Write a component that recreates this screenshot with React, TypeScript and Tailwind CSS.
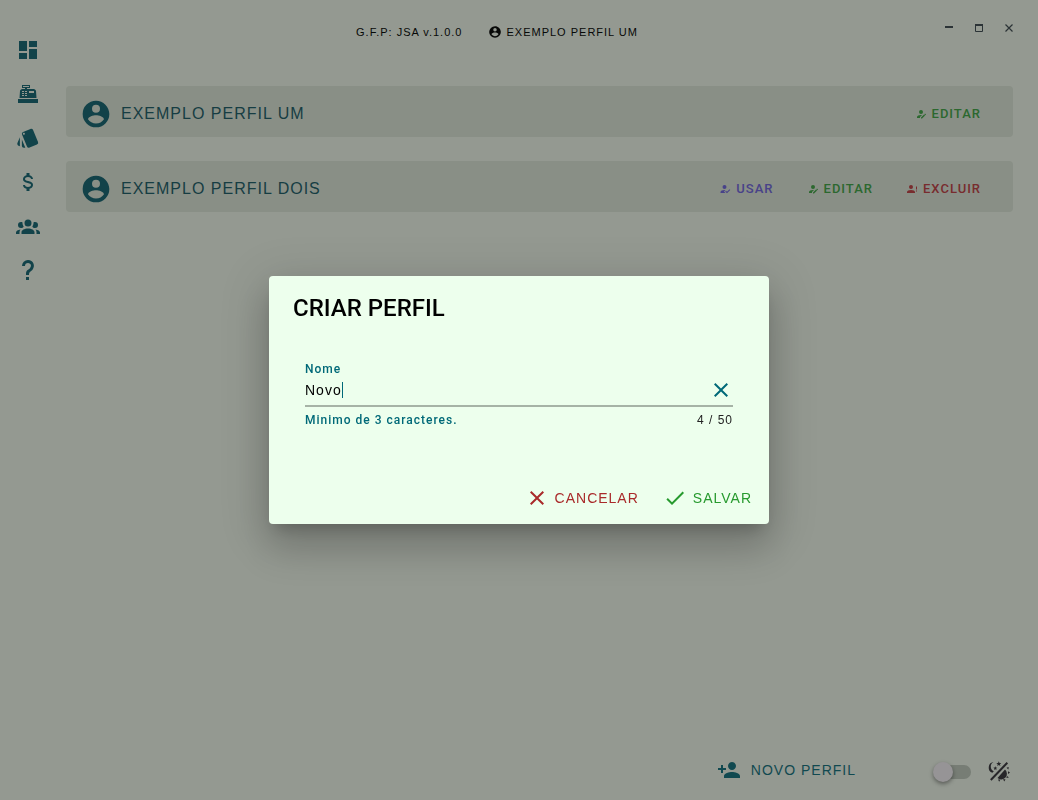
import { useState, type ReactNode } from "react";
import { MdCheck, MdClose, MdDashboard, MdPersonAdd, MdStyle } from "react-icons/md";

const paths = {
  account:
    "M12 19.2c-2.5 0-4.71-1.28-6-3.2.03-2 4-3.1 6-3.1s5.97 1.1 6 3.1a7.23 7.23 0 0 1-6 3.2M12 5a3 3 0 0 1 3 3 3 3 0 0 1-3 3 3 3 0 0 1-3-3 3 3 0 0 1 3-3m0-3A10 10 0 0 0 2 12a10 10 0 0 0 10 10 10 10 0 0 0 10-10c0-5.53-4.5-10-10-10z",
  register:
    "M2 17h20v4H2v-4M6.25 7H9V6H6V3h8v3h-3v1h6.8c1 0 2 1 2.2 2l.5 7h-17L4 9c0-1 1.25-2 2.25-2M13 9v2h5V9h-5M6 9v1h2V9H6m3 0v1h2V9H9m-3 2v1h2v-1H6m3 0v1h2v-1H9m-3 2v1h2v-1H6m3 0v1h2v-1H9M7 4v1h6V4H7z",
  dollar:
    "M7 15h2c0 1.080 1.370 2 3 2s3-.92 3-2c0-1.100-1.040-1.500-3.240-2.030C9.640 12.440 7 11.780 7 9c0-1.790 1.470-3.310 3.500-3.820V3h3v2.180C15.530 5.690 17 7.210 17 9h-2c0-1.080-1.370-2-3-2s-3 .92-3 2c0 1.100 1.040 1.500 3.240 2.030C14.360 11.560 17 12.220 17 15c0 1.790-1.470 3.310-3.500 3.820V21h-3v-2.180C8.470 18.310 7 16.790 7 15z",
  group:
    "M12 5.5A3.5 3.5 0 0 1 15.500 9 3.500 3.500 0 0 1 12 12.500 3.500 3.500 0 0 1 8.500 9 3.500 3.500 0 0 1 12 5.500M5 8c.56 0 1.080.15 1.530.42-.15 1.430.27 2.850 1.130 3.960C7.160 13.340 6.160 14 5 14a3 3 0 0 1-3-3 3 3 0 0 1 3-3m14 0a3 3 0 0 1 3 3 3 3 0 0 1-3 3c-1.160 0-2.160-.66-2.660-1.620.86-1.110 1.280-2.530 1.130-3.960C17.920 8.150 18.440 8 19 8M5.500 18.250c0-2.070 2.910-3.750 6.500-3.750s6.500 1.680 6.500 3.750V20h-13v-1.750M0 20v-1.500c0-1.390 1.890-2.560 4.450-2.900-.59.68-.95 1.620-.95 2.650V20H0m24 0h-3.500v-1.750c0-1.030-.36-1.970-.95-2.650 2.560.34 4.450 1.510 4.450 2.900V20z",
  help:
    "M10 19h3v3h-3v-3m2-17c5.350.22 7.680 5.620 4.500 9.670-.83 1-2.170 1.660-2.830 2.500C13 15 13 16 13 17h-3c0-1.670 0-3.080.67-4.080.66-1 2-1.590 2.830-2.250C15.920 8.430 15.320 5.260 12 5a3 3 0 0 0-3 3H6a6 6 0 0 1 6-6z",
  accountCheck:
    "M21.100 12.500l1.400 1.410-6.530 6.590L12.500 17l1.400-1.410 2.070 2.080 5.130-5.170M10 17l3 3H3v-2c0-2.210 3.580-4 8-4l1.890.11L10 17m1-13a4 4 0 1 1 0 8 4 4 0 0 1 0-8z",
  accountEdit:
    "M21.700 13.350l-1 1-2.050-2.050 1-1a.55.55 0 0 1 .77 0l1.280 1.280c.21.21.21.56 0 .77M12 18.940l6.060-6.060 2.050 2.050L14.060 21H12v-2.060M12 14c-4.420 0-8 1.790-8 4v2h6v-1.890l4-4c-.66-.08-1.330-.11-2-.11m0-10a4 4 0 1 0 0 8 4 4 0 0 0 0-8z",
  accountAlert:
    "M10 4a4 4 0 1 1 0 8 4 4 0 0 1 0-8m0 10c4.420 0 8 1.790 8 4v2H2v-2c0-2.210 3.580-4 8-4m10-2V7h2v6h-2v-1m0 5v-2h2v2h-2z",
};

function Icon({ name, size }: { name: keyof typeof paths; size: string }) {
  return (
    <svg viewBox="0 0 24 24" className={`shrink-0 ${size}`} fill="currentColor" aria-hidden="true">
      <path d={paths[name]} />
    </svg>
  );
}

function ThemeIcon() {
  return (
    <svg viewBox="0 0 24 24" className="size-6" fill="currentColor" aria-hidden="true">
      <path d="M6.500 2A5.600 5.600 0 0 0 5.400 12.800l1.400-1.500A5.200 5.200 0 0 1 6.500 2z" />
      <path d="M11.800 1.300l.7 1.700 1.800.1-1.400 1.200.5 1.800-1.600-1-1.600 1 .5-1.800-1.400-1.200 1.800-.1zM8.300 6.300l.6 1.300 1.400.1-1.100.9.3 1.400-1.200-.8-1.200.8.3-1.400-1.100-.9 1.400-.1z" />
      <path d="M20.300 2.800L3.800 20" stroke="currentColor" strokeWidth="2" />
      <path d="M18 9.500a5.500 5.500 0 0 1-7.500 8.500z" />
      <path d="M19.500 7.800l2.200-.8-.3 2.500zM21 11.300l2 1.300-2 1.300zM20 16l1.900 1.600-2.500.3zM16 19.200l2.500.1-1.200 2.200zM11 19.500h2.400l-1.200 2.200z" />
    </svg>
  );
}

const menu: { label: string; icon: ReactNode }[] = [
  { label: "Painel", icon: <MdDashboard className="size-6" /> },
  { label: "Caixa", icon: <Icon name="register" size="size-6" /> },
  { label: "Cartões", icon: <MdStyle className="size-6" /> },
  { label: "Finanças", icon: <Icon name="dollar" size="size-6" /> },
  { label: "Perfis", icon: <Icon name="group" size="size-6" /> },
  { label: "Ajuda", icon: <Icon name="help" size="size-6" /> },
];

function RowButton({ icon, tone, children }: { icon: keyof typeof paths; tone: string; children: ReactNode }) {
  return (
    <button
      type="button"
      className={`flex items-center gap-[5px] font-['Roboto',sans-serif] text-[13px] font-medium tracking-[1px] ${tone}`}
    >
      <Icon name={icon} size="size-3" />
      {children}
    </button>
  );
}

function ProfileRow({ name, children }: { name: string; children: ReactNode }) {
  return (
    <li className="flex items-center justify-between rounded bg-[#898f86] pt-2.5 pr-8 pb-1.5 pl-3.5">
      <div className="flex items-center gap-[9px] leading-[35px] text-[#124249]">
        <Icon name="account" size="size-8" />
        <span className="tracking-[1px] text-[#163d43]">{name}</span>
      </div>
      <div className="flex gap-[33px]">{children}</div>
    </li>
  );
}

function CreateProfileDialog() {
  const [name, setName] = useState("Novo");
  return (
    <div className="fixed inset-0 z-10 flex items-center justify-center p-6">
      <div
        role="dialog"
        aria-modal="true"
        aria-labelledby="dialog-title"
        className="w-full max-w-[500px] rounded bg-[#edffed] shadow-[0_11px_15px_-7px_rgba(0,0,0,0.2),0_24px_38px_3px_rgba(0,0,0,0.14),0_9px_46px_8px_rgba(0,0,0,0.12)]"
      >
        <h2 id="dialog-title" className="px-6 pt-4 font-['Roboto',sans-serif] text-2xl font-medium text-black">
          CRIAR PERFIL
        </h2>
        <div className="px-9 pt-[37px]">
          <label
            htmlFor="profile-name"
            className="block font-['Roboto',sans-serif] text-xs leading-4 font-medium tracking-[1px] text-[#006978]"
          >
            Nome
          </label>
          <div className="flex items-center border-b-2 border-[#a6b3a6] pb-0.5">
            <div className="grid flex-1 items-center text-sm leading-[26px] tracking-[1px]">
              <input
                id="profile-name"
                type="text"
                maxLength={50}
                value={name}
                onChange={(event) => setName(event.target.value)}
                className="col-start-1 row-start-1 w-full bg-transparent text-black caret-[#006978] outline-none"
              />
              <span aria-hidden="true" className="pointer-events-none col-start-1 row-start-1 flex h-4 items-center">
                <span className="invisible">{name}</span>
                <span className="h-4 w-px bg-[#006978]" />
              </span>
            </div>
            <button type="button" aria-label="Limpar" onClick={() => setName("")} className="text-[#006978]">
              <MdClose className="size-6" />
            </button>
          </div>
          <div className="flex justify-between pt-1 text-xs leading-[18px] tracking-[1px]">
            <span className="font-['Roboto',sans-serif] font-medium text-[#006978]">Minimo de 3 caracteres.</span>
            <span className="text-[#222]">{name.length} / 50</span>
          </div>
        </div>
        <div className="flex justify-end gap-6 pt-[57px] pr-[17px] pb-3.5 pl-4 text-sm tracking-[1px]">
          <button type="button" className="flex items-center gap-1.5 text-[#a92a2a]">
            <MdClose className="size-6" />
            CANCELAR
          </button>
          <button type="button" className="flex items-center gap-1.5 text-[#279a2e]">
            <MdCheck className="size-6" />
            SALVAR
          </button>
        </div>
      </div>
    </div>
  );
}

export default function App() {
  return (
    <div className="flex min-h-screen bg-[#949991] font-['Liberation_Sans',Arial,sans-serif] text-[#080908]">
      <nav className="flex w-14 shrink-0 flex-col items-center gap-5 pt-[38px] text-[#12434a]">
        {menu.map((item) => (
          <a key={item.label} href="#" aria-label={item.label}>
            {item.icon}
          </a>
        ))}
      </nav>

      <div className="flex flex-1 flex-col">
        <header className="grid grid-cols-[1fr_auto_1fr] items-center pt-4 pr-[22px] pl-2.5">
          <div />
          <div className="flex items-center gap-[26px] pr-[88px] text-[11px] leading-8 tracking-[1px]">
            <span>G.F.P: JSA v.1.0.0</span>
            <span className="flex items-center gap-1">
              <Icon name="account" size="size-3.5" />
              EXEMPLO PERFIL UM
            </span>
          </div>
          <div className="flex justify-end gap-4 pb-2 text-[#2b3336]">
            <button type="button" aria-label="Minimizar">
              <svg viewBox="0 0 14 14" className="size-3.5">
                <path d="M3 6h8" stroke="currentColor" strokeWidth="2" />
              </svg>
            </button>
            <button type="button" aria-label="Maximizar">
              <svg viewBox="0 0 14 14" className="size-3.5">
                <path d="M3.500 4v6.500h7V4" fill="none" stroke="currentColor" />
                <path d="M3 4h8" stroke="currentColor" strokeWidth="2" />
              </svg>
            </button>
            <button type="button" aria-label="Fechar">
              <svg viewBox="0 0 14 14" className="size-3.5">
                <path d="M3.500 3.500l7 7m0-7l-7 7" stroke="currentColor" strokeWidth="1.200" />
              </svg>
            </button>
          </div>
        </header>

        <main className="flex-1 pt-[38px] pr-[25px] pl-2.5">
          <ul className="flex flex-col gap-6">
            <ProfileRow name="EXEMPLO PERFIL UM">
              <RowButton icon="accountEdit" tone="text-[#2c682f]">EDITAR</RowButton>
            </ProfileRow>
            <ProfileRow name="EXEMPLO PERFIL DOIS">
              <RowButton icon="accountCheck" tone="text-[#484289]">USAR</RowButton>
              <RowButton icon="accountEdit" tone="text-[#2c682f]">EDITAR</RowButton>
              <RowButton icon="accountAlert" tone="text-[#782c2e]">EXCLUIR</RowButton>
            </ProfileRow>
          </ul>
        </main>

        <footer className="flex items-center justify-end pr-[27px] pb-3.5 text-[#114950]">
          <button type="button" className="flex items-center gap-2.5 pb-1 text-sm tracking-[1px]">
            <MdPersonAdd className="size-6" />
            NOVO PERFIL
          </button>
          <label className="relative ml-[79px] flex h-5 w-9 cursor-pointer items-center">
            <input type="checkbox" role="switch" aria-label="Tema escuro" className="peer sr-only" />
            <span className="h-3.5 w-full rounded-full bg-[#777d75]" />
            <span className="absolute -left-0.5 size-5 rounded-full bg-[#969496] shadow-[0_2px_4px_rgba(0,0,0,0.4)] peer-checked:left-5" />
          </label>
          <span className="ml-4 text-[#272629]">
            <ThemeIcon />
          </span>
        </footer>
      </div>

      <CreateProfileDialog />
    </div>
  );
}
